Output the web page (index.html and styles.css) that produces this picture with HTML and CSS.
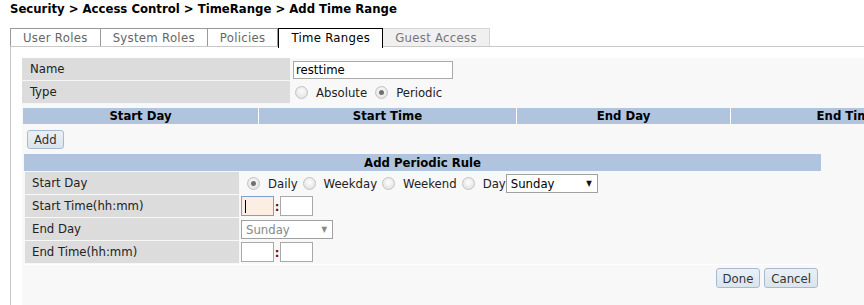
FILE: index.html
```html
<!DOCTYPE html>
<html>
<head>
<meta charset="utf-8">
<link rel="stylesheet" href="styles.css">
</head>
<body>
<div class="title">Security &gt; Access Control &gt; TimeRange &gt; Add Time Range</div>
<div class="tabs">
  <div class="tab">User Roles</div>
  <div class="tab">System Roles</div>
  <div class="tab">Policies</div>
  <div class="tab active">Time Ranges</div>
  <div class="tab disabled">Guest Access</div>
</div>
<div class="panel">
  <div class="content">
    <div class="form">
      <div class="row">
        <div class="label">Name</div>
        <div class="value"><input class="text name" type="text" value="resttime"></div>
      </div>
      <div class="row">
        <div class="label">Type</div>
        <div class="value radios">
          <span class="radio"></span><span class="rlabel">Absolute</span>
          <span class="radio checked"></span><span class="rlabel">Periodic</span>
        </div>
      </div>
    </div>
    <div class="list-head">
      <div class="col c1">Start Day</div>
      <div class="col c2">Start Time</div>
      <div class="col c3">End Day</div>
      <div class="col c4">End Time</div>
    </div>
    <div class="add-row"><button class="btn">Add</button></div>
    <div class="rule">
      <div class="rule-head">Add Periodic Rule</div>
      <div class="rrow">
        <div class="rlabel-cell">Start Day</div>
        <div class="rvalue radios">
          <span class="radio checked"></span><span class="rlabel">Daily</span>
          <span class="radio"></span><span class="rlabel">Weekday</span>
          <span class="radio"></span><span class="rlabel">Weekend</span>
          <span class="radio"></span><span class="rlabel tight">Day</span>
          <span class="select"><span class="sel-text">Sunday</span><span class="arrow">&#9660;</span></span>
        </div>
      </div>
      <div class="rrow">
        <div class="rlabel-cell">Start Time(hh:mm)</div>
        <div class="rvalue"><span class="time focus"><span class="caret"></span></span><span class="colon">:</span><span class="time"></span></div>
      </div>
      <div class="rrow">
        <div class="rlabel-cell">End Day</div>
        <div class="rvalue"><span class="select dis"><span class="sel-text">Sunday</span><span class="arrow">&#9660;</span></span></div>
      </div>
      <div class="rrow">
        <div class="rlabel-cell">End Time(hh:mm)</div>
        <div class="rvalue"><span class="time"></span><span class="colon">:</span><span class="time"></span></div>
      </div>
      <div class="actions">
        <button class="btn">Done</button>
        <button class="btn">Cancel</button>
      </div>
    </div>
  </div>
</div>
</body>
</html>
```
FILE: styles.css
```css
html, body {
  margin: 0;
  padding: 0;
  background: #fff;
  overflow: hidden;
  height: 305px;
}
body {
  font-family: "DejaVu Sans Condensed", "DejaVu Sans", sans-serif;
  font-size: 13px;
  color: #222;
}
.title {
  font-weight: bold;
  color: #000;
  padding: 1px 0 0 10px;
  height: 27px;
  line-height: 16px;
}
.tabs {
  display: flex;
  margin-left: 10px;
  height: 18px;
  border-bottom: 1px solid #c8c8c8;
}
.tab {
  border: 1px solid #9a9a9a;
  border-bottom: none;
  border-left: none;
  padding: 0 12px;
  letter-spacing: 0.3px;
  line-height: 18px;
  color: #666;
  background: #fff;
}
.tab:first-child { border-left: 1px solid #9a9a9a; }
.tab.active {
  border: 1px solid #000;
  border-bottom: none;
  color: #000;
  margin-bottom: -1px;
  height: 19px;
  position: relative;
}
.tab.disabled {
  background: #f0f0f0;
  border-color: #d4d4d4;
  color: #777;
}
.panel {
  margin-left: 10px;
  border-left: 1px solid #c8c8c8;
  padding: 11px 0 0 11px;
  height: 259px;
}
.content {
  background: #f8f8f8;
  height: 259px;
  overflow: hidden;
}
.form .row {
  display: flex;
  height: 23px;
}
.form .label {
  width: 260px;
  flex: none;
  background: #dcdcdc;
  padding-left: 8px;
  line-height: 22px;
  border-bottom: 1px solid #f4f4f4;
}
.form .value {
  display: flex;
  align-items: center;
  padding-left: 3px;
}
input.text {
  font: inherit;
  border: 1px solid #a9a9a9;
  height: 18px;
  box-sizing: border-box;
  padding: 0 2px;
  margin: 0;
  color: #000;
  background: #fff;
}
.name { width: 160px; }
.radios { display: flex; align-items: center; }
.form .radios { padding-left: 5px; }
.radio {
  width: 11px;
  height: 11px;
  border-radius: 50%;
  border: 1px solid #c2c2c2;
  background: radial-gradient(circle at 50% 40%, #fdfdfd, #dcdcdc);
  box-sizing: content-box;
  display: inline-block;
  position: relative;
  flex: none;
}
.radio.checked::after {
  content: "";
  position: absolute;
  left: 3px;
  top: 3px;
  width: 5px;
  height: 5px;
  border-radius: 50%;
  background: #707070;
}
.rlabel {
  margin: 0 8px 0 8px;
  color: #222;
}
.rlabel.tight { margin-right: 0; }
.list-head {
  display: flex;
  margin: 4px 0 0 1px;
  width: 1200px;
  height: 16px;
  background: #b0c4de;
}
.col {
  flex: none;
  text-align: center;
  font-weight: bold;
  color: #000;
  line-height: 16px;
  border-right: 1px solid #fff;
}
.c1 { width: 235px; }
.c2 { width: 257px; }
.c3 { width: 213px; }
.c4 { width: 232px; }
.add-row {
  height: 30px;
  padding: 6px 0 0 5px;
  box-sizing: border-box;
}
.btn {
  font: inherit;
  color: #333;
  background: linear-gradient(#eaf0f5, #dbe4ec);
  border: 1px solid #a7bbcf;
  border-radius: 3px;
  height: 20px;
  padding: 0 6px;
  margin: 0;
  line-height: 17px;
}
.add-row .btn { height: 19px; }
.rule {
  width: 797px;
  margin-left: 2px;
}
.rule-head {
  background: #b0c4de;
  font-weight: bold;
  color: #000;
  text-align: center;
  height: 17px;
  line-height: 17px;
  margin-bottom: 1px;
}
.rrow {
  display: flex;
  height: 22px;
  margin-bottom: 1px;
}
.rlabel-cell {
  width: 207px;
  flex: none;
  background: #dcdcdc;
  padding-left: 7px;
  margin-left: 1px;
  line-height: 22px;
}
.rvalue {
  display: flex;
  align-items: center;
  padding-left: 2px;
}
.rule .radios { padding-left: 8px; }
.rule .rlabel { margin: 0 5px 0 8px; }
.rule .rlabel.tight { margin-right: 0; }
.select {
  display: inline-flex;
  align-items: center;
  justify-content: space-between;
  width: 92px;
  height: 19px;
  box-sizing: border-box;
  border: 1px solid #a0a0a0;
  background: #fff;
  padding: 0 5px 0 4px;
  color: #000;
}
.select .arrow { font-size: 8px; color: #111; }
.select.dis { color: #888; }
.select.dis .arrow { color: #888; }
.time {
  display: inline-block;
  width: 33px;
  height: 20px;
  box-sizing: border-box;
  border: 1px solid #a9a9a9;
  background: #fff;
  position: relative;
}
.time.focus {
  background: #fdeee3;
  border-color: #7b9fd1;
}
.caret {
  position: absolute;
  left: 3px;
  top: 3px;
  width: 1px;
  height: 13px;
  background: #000;
}
.colon {
  color: #800000;
  width: 6px;
  text-align: center;
  font-weight: bold;
}
.actions {
  display: flex;
  justify-content: flex-end;
  gap: 4px;
  padding: 3px 3px 0 0;
  height: 25px;
  border-top: 1px solid #fff;
  box-sizing: border-box;
}
.actions .btn { padding: 0 6px; }
```
